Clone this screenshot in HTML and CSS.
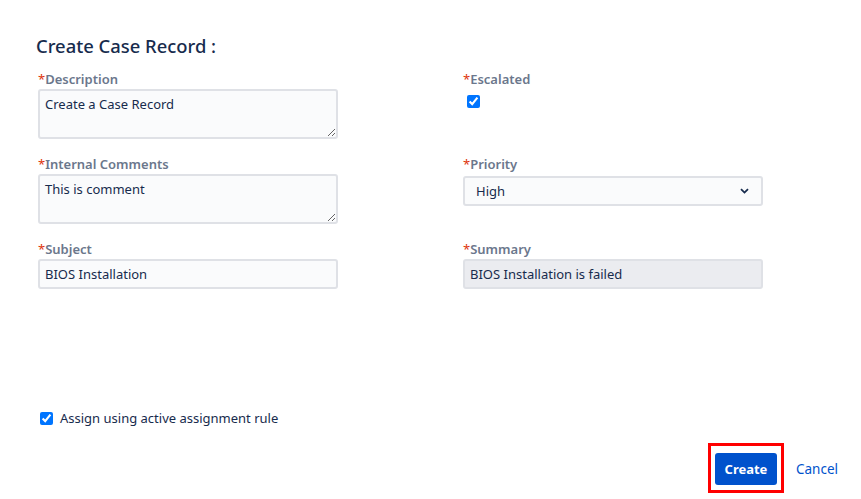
FILE: index.html
```html
<!DOCTYPE html>
<html>
<head>
<meta charset="utf-8">
<link rel="stylesheet" href="styles.css">
</head>
<body>
<div class="page">
  <h2 class="title">Create Case Record :</h2>
  <div class="form-grid">
    <div class="field">
      <label class="lbl"><span class="req">*</span>Description</label>
      <textarea class="ctl area">Create a Case Record</textarea>
    </div>
    <div class="field">
      <label class="lbl"><span class="req">*</span>Escalated</label>
      <input type="checkbox" class="chk esc" checked>
    </div>
    <div class="field">
      <label class="lbl"><span class="req">*</span>Internal Comments</label>
      <textarea class="ctl area">This is comment</textarea>
    </div>
    <div class="field">
      <label class="lbl"><span class="req">*</span>Priority</label>
      <div class="select ctl">
        <span>High</span>
        <svg class="caret" width="9" height="6" viewBox="0 0 9 6"><path d="M1 1.2 L4.5 4.6 L8 1.2" fill="none" stroke="#172b4d" stroke-width="1.8"/></svg>
      </div>
    </div>
    <div class="field">
      <label class="lbl"><span class="req">*</span>Subject</label>
      <div class="ctl input">BIOS Installation</div>
    </div>
    <div class="field">
      <label class="lbl"><span class="req">*</span>Summary</label>
      <div class="ctl input disabled">BIOS Installation is failed</div>
    </div>
  </div>
  <label class="assign"><input type="checkbox" class="chk" checked><span>Assign using active assignment rule</span></label>
  <div class="actions">
    <div class="highlight"><button class="btn-primary">Create</button></div>
    <a class="cancel">Cancel</a>
  </div>
</div>
</body>
</html>
```
FILE: styles.css
```css
* { box-sizing: border-box; }
html, body { margin: 0; padding: 0; background: #fff; }
body { font-family: "Noto Sans", "Open Sans", sans-serif; color: #172b4d; }
.page {
  height: 499px;
  padding: 34px 0 0 36px;
  display: flex;
  flex-direction: column;
}
.title {
  margin: 0 0 13px 0;
  font-size: 18.4px;
  font-weight: 500;
  color: #172b4d;
  line-height: 24px;
}
.form-grid {
  display: grid;
  grid-template-columns: 425px 300px;
  row-gap: 17px;
  padding-left: 2px;
}
.field { display: flex; flex-direction: column; }
.lbl {
  font-size: 13px;
  font-weight: 600;
  color: #6b778c;
  line-height: 16px;
  margin-bottom: 2px;
}
.req { color: #de350b; font-weight: 400; }
.ctl {
  width: 300px;
  border: 2px solid #dfe1e6;
  border-radius: 3px;
  background: #fafbfc;
  font-family: inherit;
  font-size: 13px;
  color: #172b4d;
}
.area {
  height: 50px;
  padding: 4px 5px;
  resize: vertical;
  line-height: 18px;
  margin: 0;
}
.input {
  height: 30px;
  padding: 0 5px;
  display: flex;
  align-items: center;
}
.disabled { background: #ebecf0; }
.select {
  height: 30px;
  margin-top: 2px;
  padding: 0 12px 0 11px;
  display: flex;
  align-items: center;
  justify-content: space-between;
  background: #fafbfc;
}
.chk {
  width: 13px;
  height: 13px;
  margin: 0;
  accent-color: #0075ff;
}
.esc { margin: 6px 0 0 4px; }
.assign {
  margin-top: auto;
  display: flex;
  align-items: center;
  gap: 7px;
  padding-left: 4px;
  font-size: 13px;
  color: #172b4d;
}
.actions {
  margin-top: 16px;
  margin-bottom: 6px;
  display: flex;
  justify-content: flex-end;
  align-items: center;
  gap: 12px;
  padding-right: 23px;
}
.highlight {
  border: 3px solid #ff0000;
  padding: 7px 4px 5px 4px;
}
.btn-primary {
  display: block;
  width: 62px;
  height: 32px;
  border: none;
  border-radius: 3px;
  background: #0052cc;
  color: #fff;
  font-family: inherit;
  font-size: 13px;
  font-weight: 700;
  padding: 0;
}
.cancel {
  color: #0052cc;
  font-size: 13.5px;
  margin-top: 2px;
}
```
